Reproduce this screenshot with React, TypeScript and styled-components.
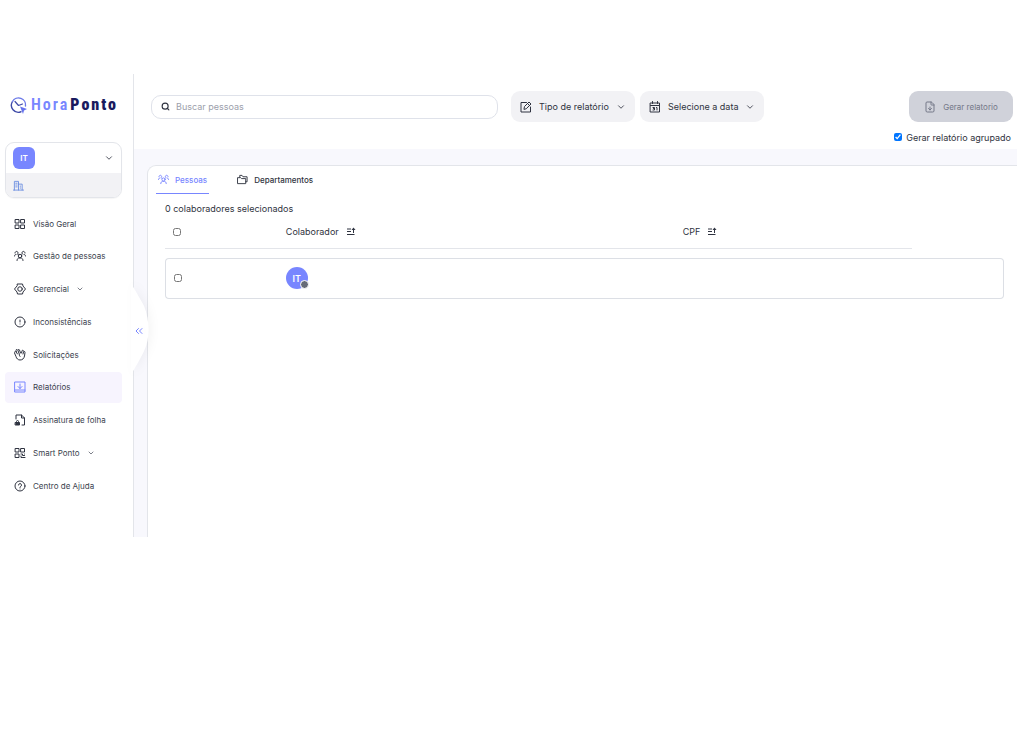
import React from "react";
import styled, { createGlobalStyle, css } from "styled-components";
import { ChevronDown, ChevronsLeft, CircleAlert, FileDown, Search } from "lucide-react";

const color = {
  brand: "#7886ff",
  navy: "#1a1a5e",
  ink: "#2f3340",
  menu: "#3b3f4e",
  line: "#e3e5ea",
  soft: "#f2f2f5",
  backdrop: "#f8f8fd",
};

const GlobalStyle = createGlobalStyle`
  *, *::before, *::after { box-sizing: border-box; }
  body { margin: 0; background: #fff; }
  body, button, input { font-family: Inter, "Liberation Sans", sans-serif; color: ${color.ink}; }
  button { border: 0; background: none; padding: 0; cursor: pointer; }
  svg { display: block; flex: none; }
`;

const Page = styled.div`
  display: flex;
  padding: 74px 7px 0 0;
`;

const Sidebar = styled.aside`
  position: relative;
  flex: none;
  width: 134px;
  padding: 22px 11px 36px 5px;
  border-right: 1px solid ${color.line};
  background: #fff;
`;

const Brand = styled.a`
  display: flex;
  align-items: center;
  gap: 4px;
  height: 18px;
  padding-left: 5px;
  color: ${color.brand};
  font: 600 16px/18px "Roboto Condensed", "Liberation Sans Narrow", sans-serif;
  text-decoration: none;
`;

const BrandName = styled.span`
  letter-spacing: 2px;
  white-space: nowrap;
  strong { color: ${color.navy}; margin-left: 1px; }
`;

const Account = styled.section`
  margin-top: 28px;
  border: 1px solid ${color.line};
  border-radius: 9px;
  overflow: hidden;
  box-shadow: 0 1px 1px #0000000a;
`;

const AccountButton = styled.button`
  display: flex;
  align-items: center;
  justify-content: space-between;
  width: 100%;
  height: 30px;
  padding: 0 7px;
`;

const Initials = styled.span<{ $round?: boolean }>`
  position: relative;
  display: flex;
  align-items: center;
  justify-content: center;
  width: 22px;
  height: 22px;
  border-radius: ${(p) => (p.$round ? "50%" : "6px")};
  background: ${color.brand};
  color: #fff;
  font-size: ${(p) => (p.$round ? "9px" : "8px")};
  font-weight: 600;
`;

const Status = styled.i`
  position: absolute;
  right: -1px;
  bottom: 0;
  width: 9px;
  height: 9px;
  border: 1px solid #fff;
  border-radius: 50%;
  background: #666b78;
`;

const Company = styled.div`
  display: flex;
  align-items: center;
  height: 24px;
  padding-left: 7px;
  background: ${color.soft};
  color: #6d8fe0;
`;

const Menu = styled.ul`
  display: flex;
  flex-direction: column;
  justify-content: space-between;
  min-height: 293px;
  margin: 10px 0 0;
  padding: 0;
  list-style: none;
`;

const MenuLink = styled.a<{ $active?: boolean }>`
  display: flex;
  align-items: center;
  gap: 7px;
  height: 31px;
  padding-left: 9px;
  border-radius: 4px;
  background: ${(p) => (p.$active ? "#f7f4fe" : "transparent")};
  color: ${color.menu};
  font-size: 8px;
  font-weight: 400;
  text-decoration: none;
  white-space: nowrap;
  > svg:first-child { color: ${(p) => (p.$active ? color.brand : color.ink)}; }
`;

const Collapse = styled.button`
  position: absolute;
  z-index: 1;
  top: 209px;
  right: -16px;
  width: 18px;
  height: 92px;
  svg { overflow: visible; filter: drop-shadow(3px 0 4px #0000000a); }
`;

const Main = styled.main`
  flex: 1;
  min-width: 0;
  display: flex;
  flex-direction: column;
  background: ${color.backdrop};
`;

const TopBar = styled.header`
  padding: 17px 4px 5px 17px;
  background: #fff;
`;

const Tools = styled.div`
  display: flex;
  align-items: center;
  gap: 5px;
`;

const SearchBox = styled.label`
  display: flex;
  flex: 0 1 347px;
  align-items: center;
  gap: 6px;
  height: 24px;
  margin-right: 8px;
  padding: 0 9px;
  border: 1px solid #dfe2ea;
  border-radius: 10px;
  input {
    flex: 1;
    min-width: 0;
    padding: 0;
    border: 0;
    outline: 0;
    background: none;
    font-size: 9px;
  }
  input::placeholder { color: #9ca0ab; opacity: 1; }
`;

const pill = css`
  display: flex;
  align-items: center;
  height: 31px;
  border-radius: 9px;
  white-space: nowrap;
`;

const FilterButton = styled.button`
  ${pill}
  gap: 7px;
  width: 124px;
  padding-left: 9px;
  background: ${color.soft};
  font-size: 9px;
`;

const GenerateButton = styled.button`
  ${pill}
  justify-content: center;
  gap: 7px;
  width: 104px;
  margin-left: auto;
  background: #d0d2da;
  color: #747888;
  font-size: 8px;
`;

const Check = styled.input`
  display: block;
  width: 8px;
  height: 8px;
  margin: 0;
`;

const GroupedOption = styled.label`
  display: flex;
  align-items: center;
  justify-content: flex-end;
  gap: 4px;
  height: 14px;
  margin-top: 8px;
  padding-right: 2px;
  font-size: 9px;
`;

const Panel = styled.section`
  flex: 1;
  margin: 16px 0 0 13px;
  border: solid ${color.line};
  border-width: 1px 0 0 1px;
  border-radius: 9px 0 0 0;
  background: #fff;
`;

const Tabs = styled.nav`
  display: flex;
  gap: 26px;
  padding-left: 8px;
`;

const Tab = styled.button<{ $active?: boolean }>`
  display: flex;
  align-items: center;
  gap: 6px;
  height: 28px;
  padding: 0 2px;
  border-bottom: 1px solid ${(p) => (p.$active ? color.brand : "transparent")};
  color: ${(p) => (p.$active ? color.brand : color.ink)};
  font-size: 8px;
  font-weight: 500;
`;

const Listing = styled.div`
  padding: 8px 13px 0 17px;
  font-size: 9px;
`;

const Selected = styled.p`
  margin: 0;
  line-height: 14px;
`;

const People = styled.table`
  width: 100%;
  border-collapse: separate;
  border-spacing: 0 9px;
  table-layout: fixed;
  margin-top: -9px;
`;

const HeadCell = styled.th<{ $width: string; $ruled?: boolean }>`
  width: ${(p) => p.$width};
  height: 33px;
  padding: 0 0 1px;
  border-bottom: 1px solid ${(p) => (p.$ruled ? color.line : "transparent")};
  font-weight: 400;
  text-align: left;
`;

const HeadLabel = styled.span`
  display: flex;
  align-items: center;
  gap: 7px;
`;

const Cell = styled.td`
  height: 41px;
  padding: 0 0 1px;
  border: solid #dcdfe5;
  border-width: 1px 0;
  &:first-child { border-left-width: 1px; border-radius: 4px 0 0 4px; }
  &:last-child { border-right-width: 1px; border-radius: 0 4px 4px 0; }
`;

const CheckSlot = styled.span`
  display: block;
  padding-left: 8px;
`;

type IconProps = { size?: number; children: React.ReactNode };
const Icon = ({ size = 12, children }: IconProps) => (
  <svg width={size} height={size} viewBox="0 0 24 24" fill="none" stroke="currentColor" strokeWidth="2" strokeLinecap="round" strokeLinejoin="round" aria-hidden="true">
    {children}
  </svg>
);

const LogoMark = () => (
  <svg width="17" height="18" viewBox="0 0 34 36" fill="none" aria-hidden="true">
    <path d="M5 11A14 14 0 0 0 22 31.500" stroke="#3f4ba8" strokeWidth="2.800" strokeLinecap="round" />
    <path d="M5 11A14 14 0 0 1 31 20" stroke="#6a78e8" strokeWidth="2.800" strokeLinecap="round" />
    <path d="M10 11l7 8 8-3" stroke="#3f4ba8" strokeWidth="2.400" strokeLinecap="round" strokeLinejoin="round" />
    <path d="M20 21l14 5-6 3-2 7z" fill="#6572ee" />
  </svg>
);

const GridIcon = () => (
  <Icon><rect x="3" y="3" width="7" height="7" /><rect x="14" y="3" width="7" height="7" /><rect x="3" y="14" width="7" height="7" /><rect x="14" y="14" width="7" height="7" /></Icon>
);
const PeopleIcon = ({ size = 12 }: { size?: number }) => (
  <Icon size={size}>
    <circle cx="12" cy="12" r="3.500" /><path d="M6 21c0-3 2-5 4-5h4c2 0 4 2 4 5" />
    <path d="M1 12c0-2 1-3 3-3M2 6a3 3 0 1 1 5 2l2 2M23 12c0-2-1-3-3-3M22 6a3 3 0 1 0-5 2l-2 2" />
  </Icon>
);
const NutIcon = () => (
  <Icon><path d="M7 2h10l1 4 5 6-5 6-1 4H7l-1-4-5-6 5-6z" /><circle cx="12" cy="12" r="4.500" /></Icon>
);
const HandsIcon = () => (
  <Icon>
    <path d="M7 10L4 6a1.500 1.500 0 0 0-3 2l3 7c1 4 4 7 8 7 5 0 8-3 9-8l1-7a1.500 1.500 0 0 0-3-1l-1 4" />
    <path d="M10 9L8 3a1.500 1.500 0 0 1 3-1l2 6c-3 2-3 5-1 7M5 6L4 3a1.500 1.500 0 0 1 3-1M15 8l1-4a1.500 1.500 0 0 1 3 0" />
  </Icon>
);
const ReportIcon = () => (
  <Icon><rect x="2" y="2" width="20" height="20" /><path d="M12 6v9M8 11l4 4 4-4M2 18h20" /></Icon>
);
const SignatureIcon = () => (
  <Icon><path d="M4 10V2h11l6 6v14h-5M15 2v6h6" /><rect x="3" y="17" width="8" height="5" fill="currentColor" /><path d="M5 16v-1a2 2 0 0 1 4 0v1" /></Icon>
);
const QrIcon = () => (
  <Icon><rect x="3" y="3" width="7" height="7" /><rect x="14" y="3" width="7" height="7" /><rect x="3" y="14" width="7" height="7" /><path d="M14 14h3v3h4M21 14v0M14 18v3h3M18 21h4" /></Icon>
);
const HelpIcon = () => (
  <Icon><circle cx="12" cy="12" r="10" /><path d="M9 10a3 3 0 1 1 4 3c-1 .500-1 1-1 2M12 18h0" /></Icon>
);
const BuildingIcon = () => (
  <Icon size={11}><path d="M3 22V3h9v19M12 9h8v13M1 22h22M6 7h3M6 11h3M6 15h3M16 13v1M16 17v1" /></Icon>
);
const EditIcon = () => (
  <Icon><path d="M13 3H2v19h19V12" /><path d="M8 16l1-5 9-9 4 4-9 9zM15 5l4 4" /></Icon>
);
const CalendarIcon = () => (
  <Icon><path d="M3 4h18v18H3zM3 9h18M7 1v4M17 1v4M8 13h3v5H8M9 15h2M15 13h1v5" /></Icon>
);
const FoldersIcon = () => (
  <Icon size={11}><path d="M6 7V3h5l2 3h9v11h-3M2 8h6l2 2h9v11H2z" /></Icon>
);
const SortIcon = () => (
  <svg width="10" height="9" viewBox="0 0 20 18" fill="none" stroke="currentColor" strokeWidth="2" aria-hidden="true">
    <path d="M2 4h8M2 9h8M2 15h15M15 12V3" /><path d="M11 6l4-5 4 5z" fill="currentColor" stroke="none" />
  </svg>
);

const menuItems = [
  { label: "Visão Geral", icon: <GridIcon /> },
  { label: "Gestão de pessoas", icon: <PeopleIcon /> },
  { label: "Gerencial", icon: <NutIcon />, expandable: true },
  { label: "Inconsistências", icon: <CircleAlert size={12} /> },
  { label: "Solicitações", icon: <HandsIcon /> },
  { label: "Relatórios", icon: <ReportIcon />, active: true },
  { label: "Assinatura de folha", icon: <SignatureIcon /> },
  { label: "Smart Ponto", icon: <QrIcon />, expandable: true },
  { label: "Centro de Ajuda", icon: <HelpIcon /> },
];

export default function App() {
  return (
    <Page>
      <GlobalStyle />
      <Sidebar>
        <Brand href="#">
          <LogoMark />
          <BrandName>Hora<strong>Ponto</strong></BrandName>
        </Brand>
        <Account>
          <AccountButton aria-label="Trocar conta">
            <Initials>IT</Initials>
            <ChevronDown size={10} />
          </AccountButton>
          <Company><BuildingIcon /></Company>
        </Account>
        <Menu>
          {menuItems.map((item) => (
            <li key={item.label}>
              <MenuLink href="#" $active={item.active}>
                {item.icon}
                {item.label}
                {item.expandable && <ChevronDown size={8} />}
              </MenuLink>
            </li>
          ))}
        </Menu>
        <Collapse aria-label="Recolher menu">
          <svg width="18" height="92" viewBox="0 0 18 92" aria-hidden="true">
            <path d="M0 0C3 6 10 17 13 23C19 38 19 56 13 68C10 75 3 86 0 92z" fill="#fff" />
            <g transform="translate(2 42)"><ChevronsLeft size={12} color={color.brand} /></g>
          </svg>
        </Collapse>
      </Sidebar>
      <Main>
        <TopBar>
          <Tools>
            <SearchBox>
              <Search size={9} strokeWidth={3} />
              <input type="search" placeholder="Buscar pessoas" aria-label="Buscar pessoas" />
            </SearchBox>
            <FilterButton><EditIcon />Tipo de relatório<ChevronDown size={10} /></FilterButton>
            <FilterButton><CalendarIcon />Selecione a data<ChevronDown size={10} /></FilterButton>
            <GenerateButton><FileDown size={12} />Gerar relatorio</GenerateButton>
          </Tools>
          <GroupedOption>
            <Check type="checkbox" defaultChecked />
            Gerar relatório agrupado
          </GroupedOption>
        </TopBar>
        <Panel>
          <Tabs>
            <Tab $active><PeopleIcon size={11} />Pessoas</Tab>
            <Tab><FoldersIcon />Departamentos</Tab>
          </Tabs>
          <Listing>
            <Selected>0 colaboradores selecionados</Selected>
            <People>
              <thead>
                <tr>
                  <HeadCell $width="14.4%" $ruled><CheckSlot><Check type="checkbox" aria-label="Selecionar todos" /></CheckSlot></HeadCell>
                  <HeadCell $width="47.3%" $ruled><HeadLabel>Colaborador<SortIcon /></HeadLabel></HeadCell>
                  <HeadCell $width="27.3%" $ruled><HeadLabel>CPF<SortIcon /></HeadLabel></HeadCell>
                  <HeadCell $width="11%" />
                </tr>
              </thead>
              <tbody>
                <tr>
                  <Cell><CheckSlot><Check type="checkbox" aria-label="Selecionar IT" /></CheckSlot></Cell>
                  <Cell><Initials $round>IT<Status /></Initials></Cell>
                  <Cell />
                  <Cell />
                </tr>
              </tbody>
            </People>
          </Listing>
        </Panel>
      </Main>
    </Page>
  );
}
